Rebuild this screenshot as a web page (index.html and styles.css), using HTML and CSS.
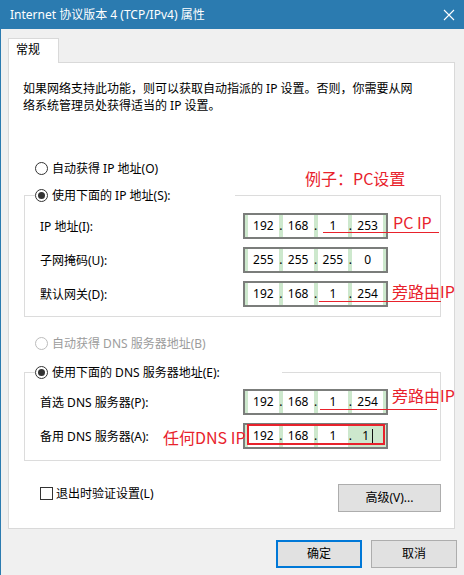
FILE: index.html
```html
<!DOCTYPE html>
<html lang="zh-CN">
<head>
<meta charset="utf-8">
<title>Internet 协议版本 4 (TCP/IPv4) 属性</title>
<link rel="stylesheet" href="styles.css">
</head>
<body>
<div class="window">
  <div class="titlebar">
    <span class="title">Internet 协议版本 4 (TCP/IPv4) 属性</span>
    <svg class="close" width="12" height="12" viewBox="0 0 12 12"><path d="M1 1 L11 11 M11 1 L1 11" stroke="#ffffff" stroke-width="1.1" fill="none"/></svg>
  </div>
  <div class="body">
    <div class="tabs"><div class="tab">常规</div></div>
    <div class="panel">
      <p class="desc">如果网络支持此功能，则可以获取自动指派的 IP 设置。否则，你需要从网<br>络系统管理员处获得适当的 IP 设置。</p>

      <label class="radio first"><span class="circle"></span>自动获得 IP 地址(O)</label>

      <fieldset class="group g1">
        <legend class="legend l1"><label class="radio"><span class="circle on"></span>使用下面的 IP 地址(S):</label></legend>
        <div class="rows">
          <div class="row">
            <span class="lbl">IP 地址(I):</span>
            <div class="ipbox"><span class="seg">192</span><span class="dot">.</span><span class="seg">168</span><span class="dot">.</span><span class="seg">1</span><span class="dot">.</span><span class="seg">253</span></div>
          </div>
          <div class="row">
            <span class="lbl">子网掩码(U):</span>
            <div class="ipbox"><span class="seg">255</span><span class="dot">.</span><span class="seg">255</span><span class="dot">.</span><span class="seg">255</span><span class="dot">.</span><span class="seg">0</span></div>
          </div>
          <div class="row">
            <span class="lbl">默认网关(D):</span>
            <div class="ipbox"><span class="seg">192</span><span class="dot">.</span><span class="seg">168</span><span class="dot">.</span><span class="seg">1</span><span class="dot">.</span><span class="seg">254</span></div>
          </div>
        </div>
      </fieldset>

      <label class="radio dns-auto disabled"><span class="circle"></span>自动获得 DNS 服务器地址(B)</label>

      <fieldset class="group g2">
        <legend class="legend l2"><label class="radio"><span class="circle on"></span>使用下面的 DNS 服务器地址(E):</label></legend>
        <div class="rows">
          <div class="row">
            <span class="lbl">首选 DNS 服务器(P):</span>
            <div class="ipbox"><span class="seg">192</span><span class="dot">.</span><span class="seg">168</span><span class="dot">.</span><span class="seg">1</span><span class="dot">.</span><span class="seg">254</span></div>
          </div>
          <div class="row">
            <span class="lbl">备用 DNS 服务器(A):</span>
            <div class="ipbox"><span class="seg">192</span><span class="dot">.</span><span class="seg">168</span><span class="dot">.</span><span class="seg">1</span><span class="dot">.</span><span class="seg sel">1<span class="caret"></span></span></div>
          </div>
        </div>
      </fieldset>

      <div class="bottom-row">
        <label class="check"><span class="box"></span>退出时验证设置(L)</label>
        <button class="btn adv">高级(V)...</button>
      </div>
    </div>
    <div class="footer">
      <button class="btn default">确定</button>
      <button class="btn">取消</button>
    </div>
  </div>

  <div class="note n1">例子：PC设置</div>
  <div class="note n2">PC IP</div>
  <div class="note n3">旁路由IP</div>
  <div class="note n4">旁路由IP</div>
  <div class="note n5">任何DNS IP</div>
  <div class="uline u1"></div>
  <div class="uline u2"></div>
  <div class="uline u3"></div>
  <div class="redbox"></div>
</div>
</body>
</html>
```

FILE: styles.css
```css
* { box-sizing: border-box; }

html, body {
  margin: 0;
  padding: 0;
  background: #f0f0f0;
}

body {
  font-family: "Noto Sans", "Noto Sans CJK SC", sans-serif;
  font-size: 12px;
  color: #000;
}

.window {
  position: relative;
  width: 464px;
  height: 575px;
  overflow: hidden;
  background: #f0f0f0;
  box-shadow: inset 1px 0 0 #2b7bb0;
}

.titlebar {
  height: 29px;
  background: #2b7bb0;
  display: flex;
  align-items: center;
  justify-content: space-between;
  padding: 0 9px 0 10px;
  color: #ffffff;
}

.title {
  font-size: 12px;
  line-height: 16px;
  white-space: nowrap;
}

.close { display: block; }

.body {
  padding: 9px 0 0 8px;
}

.tabs { display: flex; }

.tab {
  position: relative;
  z-index: 1;
  width: 51px;
  height: 25px;
  margin-bottom: -1px;
  background: #fff;
  border: 1px solid #d9d9d9;
  border-bottom: none;
  padding-left: 7px;
  line-height: 22px;
}

.panel {
  width: 447px;
  height: 467px;
  background: #fff;
  border: 1px solid #d9d9d9;
  display: flex;
  flex-direction: column;
  align-items: flex-start;
}

.desc {
  margin: 17px 0 0 14px;
  line-height: 17px;
  white-space: nowrap;
}

.radio {
  display: flex;
  align-items: center;
  height: 20px;
  white-space: nowrap;
}

.radio.first { margin: 44px 0 0 26px; }
.radio.dns-auto { margin: 16px 0 0 26px; }
.radio.disabled { color: #9c9c9c; }

.circle {
  width: 13px;
  height: 13px;
  border: 1px solid #333;
  border-radius: 50%;
  margin-right: 4px;
  display: flex;
  align-items: center;
  justify-content: center;
  flex: none;
}

.radio.disabled .circle { border-color: #bcbcbc; }

.circle.on::after {
  content: "";
  width: 7px;
  height: 7px;
  border-radius: 50%;
  background: #333;
}

.group {
  margin: 0 0 0 15px;
  width: 417px;
  min-width: 0;
  border: 1px solid #dcdcdc;
}

.g1 { margin-top: 7px; padding: 8px 0 9px 15px; }
.g2 { margin-top: 9px; padding: 7px 0 11px 15px; }

.legend {
  padding: 0;
  margin-left: -5px;
  background: #fff;
}
.l1 { width: 200px; }
.l2 { width: 247px; }

.rows {
  display: flex;
  flex-direction: column;
  gap: 8px;
}

.row {
  display: flex;
  align-items: center;
  height: 26px;
}

.lbl {
  width: 203px;
  white-space: nowrap;
}

.ipbox {
  width: 145px;
  height: 26px;
  border: 2px solid #7b7d7b;
  background: #cde8cd;
  display: flex;
  padding: 0 3px;
}

.seg {
  flex: 1;
  background: #fff;
  text-align: center;
  line-height: 22px;
}

.seg.sel { background: #cde8cd; }

.caret {
  display: inline-block;
  width: 1px;
  height: 16px;
  background: #111;
  vertical-align: middle;
  margin-left: 3px;
}

.dot {
  width: 4px;
  text-align: center;
  line-height: 22px;
  display: flex;
  justify-content: center;
}

.bottom-row {
  margin: 23px 0 0 31px;
  width: 401px;
  display: flex;
  justify-content: space-between;
  align-items: flex-start;
}

.check {
  display: flex;
  align-items: center;
  height: 18px;
  white-space: nowrap;
}

.box {
  width: 13px;
  height: 13px;
  border: 1px solid #333;
  margin-right: 3px;
  flex: none;
}

.btn {
  font-family: inherit;
  font-size: 12px;
  color: #000;
  background: #e1e1e1;
  border: 1px solid #adadad;
  height: 28px;
  width: 86px;
  padding: 0;
  line-height: 20px;
}

.btn.adv { width: 103px; }

.btn.default { border: 2px solid #0078d7; }

.footer {
  display: flex;
  justify-content: flex-end;
  gap: 9px;
  margin-top: 11px;
  padding-right: 7px;
}

/* red annotations drawn over the dialog */
.note {
  position: absolute;
  color: #e8222c;
  font-family: "Noto Sans CJK SC", sans-serif;
  font-size: 16px;
  line-height: 20px;
  white-space: nowrap;
}
.n1 { left: 305px; top: 168px; }
.n2 { left: 393px; top: 212px; }
.n3 { left: 392px; top: 281px; }
.n4 { left: 392px; top: 385px; }
.n5 { left: 163px; top: 427px; }

.uline {
  position: absolute;
  height: 1px;
  background: #e8222c;
}
.u1 { left: 323px; top: 232px; width: 116px; }
.u2 { left: 319px; top: 301px; width: 122px; }
.u3 { left: 320px; top: 409px; width: 117px; }

.redbox {
  position: absolute;
  left: 247px;
  top: 424px;
  width: 138px;
  height: 21px;
  border: 2px solid #e8222c;
}
```
